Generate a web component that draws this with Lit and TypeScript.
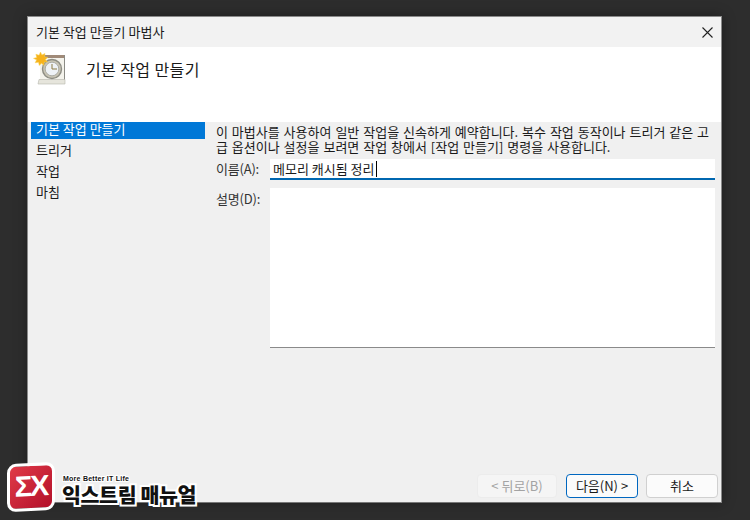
import { LitElement, html, css } from "lit";
import { customElement } from "lit/decorators.js";

@customElement("app-root")
export class AppRoot extends LitElement {
  static styles = css`
    :host {
      display: block;
      width: 750px;
      height: 520px;
      box-sizing: border-box;
      padding: 16px 28px 17px 27px;
      background: #2d2d2d;
      font-family: "Noto Sans CJK KR", "Noto Sans", sans-serif;
      font-size: 13px;
      color: #1a1a1a;
      position: relative;
      overflow: hidden;
    }
    .win {
      height: 100%;
      box-sizing: border-box;
      border: 1px solid #8a8a8a;
      border-bottom-color: #777;
      background: #f0f0f0;
      display: flex;
      flex-direction: column;
      box-shadow: 0 0 12px rgba(0, 0, 0, 0.35);
    }
    .title {
      height: 30px;
      flex: none;
      display: flex;
      align-items: center;
      justify-content: space-between;
      padding: 0 8px 0 8px;
      background: #f2f2f2;
      line-height: 30px;
    }
    .close { width: 11px; height: 11px; display: block; }
    .head {
      height: 75px;
      flex: none;
      background: #fff;
      display: flex;
      gap: 20px;
      padding: 5px 0 0 5px;
      box-sizing: border-box;
    }
    .head svg { width: 33px; height: 33px; display: block; flex: none; }
    .head h1 {
      margin: 0;
      font-size: 16px;
      font-weight: 400;
      line-height: 24px;
      padding-top: 5px;
      letter-spacing: 0.4px;
    }
    .main { flex: 1; display: flex; min-height: 0; padding-left: 3px; }
    .side { width: 174px; flex: none; }
    .item { height: 21px; line-height: 19px; padding-left: 5px; }
    .item.sel { height: 17px; line-height: 14px; margin-bottom: 1px; background: #0078d7; color: #fff; }
    .content { flex: 1; padding: 2px 3px 0 11px; min-width: 0; display: flex; flex-direction: column; }
    .desc { margin: 0; line-height: 15px; white-space: pre; word-spacing: 1px; }
    .row { display: flex; }
    .lab { width: 54px; flex: none; line-height: 18px; color: #333; letter-spacing: -0.2px; }
    .name {
      flex: none;
      width: 445px;
      height: 21px;
      box-sizing: border-box;
      background: #fff;
      border-bottom: 2px solid #0067b0;
      padding-left: 3px;
      line-height: 19px;
      display: flex;
      align-items: center;
    }
    .caret { display: block; width: 1px; height: 16px; background: #000; margin-left: 1px; }
    .row1 { margin-top: 5px; }
    .row1 .lab { padding-top: 1px; }
    .row2 { margin-top: 8px; }
    .row2 .lab { padding-top: 2px; }
    .area {
      flex: none;
      width: 445px;
      height: 160px;
      box-sizing: border-box;
      background: #fff;
      border-bottom: 1px solid #8a8a8a;
    }
    .spacer { flex: 1; }
    .btns {
      display: flex;
      justify-content: flex-end;
      gap: 8px;
      margin-bottom: 4px;
    }
    .btn {
      width: 72px;
      height: 24px;
      box-sizing: border-box;
      border: 1px solid #d0d0d0;
      border-radius: 4px;
      background: #fbfbfb;
      text-align: center;
      line-height: 22px;
      font-size: 13px;
    }
    .btn.off { width: 80px; margin-right: 1px; background: #f5f5f5; border-color: #ececec; color: #a3a3a3; }
    .btn.def { border-color: #0067c0; }
    .logo {
      position: absolute;
      left: 7px;
      top: 463px;
      display: flex;
      gap: 7px;
      align-items: flex-start;
    }
    .badge {
      width: 48px;
      height: 48px;
      box-sizing: border-box;
      border: 3px solid #fff;
      border-radius: 9px;
      background: linear-gradient(135deg, #e03a48, #b3102a);
      color: #fff;
      font-family: "Liberation Sans", sans-serif;
      font-weight: 700;
      font-size: 29px;
      line-height: 41px;
      text-align: center;
      letter-spacing: -2px;
      transform: skewY(-3deg);
    }
    .ltext { padding-top: 11px; }
    .tag {
      font-family: "Liberation Sans", sans-serif;
      font-weight: 700;
      font-size: 7px;
      line-height: 10px;
      letter-spacing: 0.25px;
      color: #111;
      paint-order: stroke fill;
      -webkit-text-stroke: 2px #fff;
      padding-left: 1px;
    }
    .brand {
      font-weight: 900;
      font-size: 20.6px;
      line-height: 20px;
      color: #111;
      paint-order: stroke fill;
      -webkit-text-stroke: 4px #fff;
      white-space: nowrap;
      letter-spacing: -0.4px;
    }
  `;

  render() {
    return html`
      <div class="win">
        <div class="title">
          <span>기본 작업 만들기 마법사</span>
          <svg class="close" viewBox="0 0 11 11"><path d="M.5.5l10 10M10.500.5l-10 10" stroke="#222" stroke-width="1.1" fill="none"/></svg>
        </div>
        <div class="head">
          <svg viewBox="0 0 33 33">
            <path d="M7 3h25v4H7z" fill="#a08a78"/>
            <path d="M7 6h25v24H7z" fill="#f4f3ec"/>
            <path d="M31.500 3v28" stroke="#8b8b85"/>
            <path d="M6 27.500h26V32H5z" fill="#e6e5dc" stroke="#b5b5ad" stroke-width=".6"/>
            <circle cx="19" cy="17" r="9.500" fill="#c9c5b5" stroke="#8d8d84" stroke-width="1.400"/>
            <circle cx="19" cy="17" r="6.800" fill="#eef2f6" stroke="#9a9a92" stroke-width=".7"/>
            <path d="M19 12v5h5" stroke="#8c7a45" stroke-width="1" fill="none"/>
            <path d="M7.500 0l1.400 3L12 1.500l-.5 3.300 3.300.6-2.500 2.200 2.200 2.500-3.300-.1-.2 3.300-2.600-2.100L6.300 13.500 5.500 10.300l-3.300.5 1.400-3L.5 6.400l3.200-1-.8-3.200 3.200 1.100z" fill="#f6b21c" stroke="#f9d24f" stroke-width=".5"/>
          </svg>
          <h1>기본 작업 만들기</h1>
        </div>
        <div class="main">
          <div class="side">
            <div class="item sel">기본 작업 만들기</div>
            <div class="item">트리거</div>
            <div class="item">작업</div>
            <div class="item">마침</div>
          </div>
          <div class="content">
            <p class="desc">이 마법사를 사용하여 일반 작업을 신속하게 예약합니다. 복수 작업 동작이나 트리거 같은 고
급 옵션이나 설정을 보려면 작업 창에서 [작업 만들기] 명령을 사용합니다.</p>
            <div class="row row1">
              <div class="lab">이름(A):</div>
              <div class="name">메모리 캐시됨 정리<i class="caret"></i></div>
            </div>
            <div class="row row2">
              <div class="lab">설명(D):</div>
              <div class="area"></div>
            </div>
            <div class="spacer"></div>
            <div class="btns">
              <div class="btn off">&lt; 뒤로(B)</div>
              <div class="btn def">다음(N) &gt;</div>
              <div class="btn">취소</div>
            </div>
          </div>
        </div>
      </div>
      <div class="logo">
        <div class="badge">ΣX</div>
        <div class="ltext">
          <div class="tag">More Better IT Life</div>
          <div class="brand">익스트림 매뉴얼</div>
        </div>
      </div>
    `;
  }
}
